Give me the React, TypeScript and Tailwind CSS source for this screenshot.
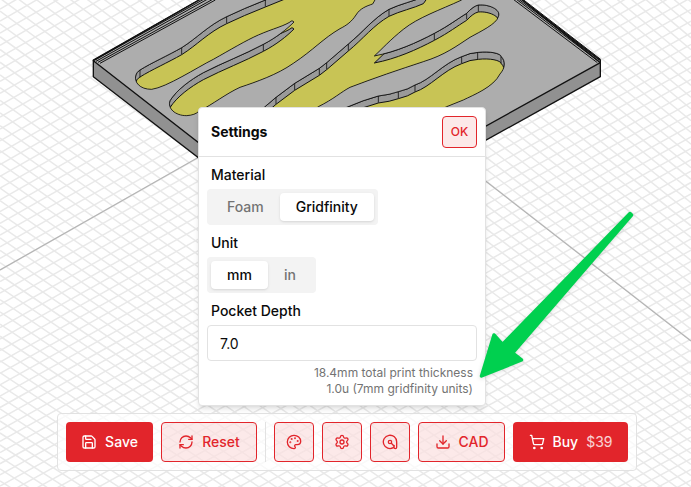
import { useState } from 'react'
import { Download, Palette, RefreshCw, Save, Settings, ShoppingCart } from 'lucide-react'

const outlineButton =
  'flex h-10 items-center justify-center gap-2 rounded border border-[#e2252b] bg-[#e2252b]/10 text-sm font-medium text-[#e2252b]'
const solidButton =
  'flex h-10 items-center justify-center gap-2 rounded bg-[#e2252b] text-sm font-medium text-white'

// Pocket rims. The floor is the same outline, dropped by the pocket depth.
const pockets = [
  'M 620 -80 L 620 -26 L 556 0 Q 490 26 440 50 C 385 76 350 115 305 143 C 265 166 215 188 180 210 C 155 225 163 268 215 268 C 260 262 350 203 400 178 C 450 150 500 120 535 105 C 580 85 615 78 636 62 L 642 66 C 620 88 590 112 550 133 C 490 165 430 187 370 218 C 330 240 290 270 270 302 C 262 325 285 347 320 347 Q 345 345 355 335 C 400 312 440 280 480 262 C 530 245 590 225 640 190 C 700 150 730 115 780 86 C 800 76 815 65 828 45 C 840 25 860 18 878 12 L 886 -2 L 900 -80 Z',
  'M 500 370 L 555 320 L 588 292 L 644 250 L 718 205 L 740 188 L 805 132 C 850 95 880 55 927 28 C 960 12 1000 4 1030 -10 L 1080 -80 L 1220 -80 L 1145 0 C 1080 30 1015 52 970 88 C 930 120 905 148 883 168 C 950 155 1010 128 1063 100 C 1110 75 1130 58 1160 40 Q 1180 18 1195 15 C 1225 12 1265 28 1255 50 C 1250 72 1200 95 1170 112 C 1130 138 1095 165 1030 185 C 960 208 880 235 810 262 C 785 275 760 298 715 320 L 650 370 Z',
  'M 740 350 L 800 322 Q 850 300 895 288 Q 930 284 955 275 Q 985 268 1005 255 C 1050 240 1090 190 1145 170 Q 1170 158 1195 157 C 1230 153 1262 160 1264 170 C 1278 185 1275 205 1260 222 C 1240 262 1180 285 1150 300 L 1100 320 L 1040 350 Z',
]

const creases = [
  [180, 210, 22],
  [305, 143, 20],
  [440, 50, 20],
  [556, 0, 20],
  [550, 133, 20],
  [588, 292, 20],
  [644, 250, 20],
  [718, 205, 20],
  [740, 188, 20],
  [805, 132, 20],
  [927, 28, 20],
  [1063, 100, 20],
  [1160, 40, 18],
  [1195, 15, 20],
  [895, 288, 20],
  [955, 275, 20],
  [1005, 255, 20],
  [1145, 170, 20],
  [1193, 157, 20],
  [1263, 170, 20],
]

// Ground grid in perspective: spacing and slope both ease off towards the bottom.
const gridLines = Array.from({ length: 120 }, (_, n) => {
  const i = n - 50
  const rise = 270 + 11.6 * i - 0.012 * i * i
  const fall = -197 + 13.2 * i - 0.012 * i * i
  return {
    i,
    rise,
    riseEnd: rise - 691 * (0.566 - 0.00005 * (rise - 270)),
    fall,
    fallEnd: fall + 691 * (0.778 - 0.0002 * (fall + 197)),
  }
})

function Scene() {
  return (
    <svg
      className="absolute inset-0 h-full w-full"
      viewBox="0 0 691 487"
      preserveAspectRatio="xMidYMid slice"
      aria-hidden="true"
    >
      <defs>
        {pockets.map((d, i) => (
          <clipPath id={`pocket-${i}`} key={i}>
            <path d={d} />
          </clipPath>
        ))}
      </defs>
      <g stroke="#e9e9e9" strokeWidth="1.5">
        {gridLines.map((g) => (
          <g key={g.i}>
            <line x1="0" y1={g.rise} x2="691" y2={g.riseEnd} />
            <line x1="0" y1={g.fall} x2="691" y2={g.fallEnd} />
          </g>
        ))}
      </g>
      <g stroke="#b4b4b4" strokeWidth="1.2">
        <line x1="0" y1="270" x2="347" y2="73" />
        <line x1="347" y1="73" x2="691" y2="341" />
      </g>
      <g transform="scale(.333333) translate(240 0)" stroke="#111" strokeWidth="4" strokeLinejoin="round">
        <path d="M 40 180 L 366 -5 L 1320 -5 L 1561 180 V 230 L 677 721 L 40 230 Z" fill="#919191" />
        <path d="M 40 182 L 366 -5 L 1320 -5 L 1561 188 L 677 678 Z" fill="#adadad" />
        <path
          d="M 44 180 L 376 -5 M 48 184 L 387 -5 M 54 187 L 398 -2 M 60 190 L 406 0 M 1300 -2 L 1552 188 M 1308 -3 L 1556 184 M 1315 -3 L 1558 180 M 1326 -4 L 1562 178"
          fill="none"
          strokeWidth="3"
        />
        {pockets.map((d, i) => (
          <g key={i} clipPath={`url(#pocket-${i})`} strokeWidth="3">
            <path d={d} fill="#9a9a9a" />
            <path d={d} transform="translate(0 21)" fill="#c8c455" />
          </g>
        ))}
        {pockets.map((d, i) => (
          <path key={i} d={d} fill="none" strokeWidth="2.5" />
        ))}
        {creases.map(([x, y, h]) => (
          <path key={`${x}-${y}`} d={`M ${x} ${y} v ${h}`} strokeWidth="2.5" />
        ))}
      </g>
    </svg>
  )
}

function Arrow() {
  return (
    <svg
      className="pointer-events-none absolute inset-0 z-20 h-full w-full drop-shadow-sm"
      viewBox="0 0 691 487"
      preserveAspectRatio="xMidYMid slice"
      aria-hidden="true"
    >
      <path
        d="M 481.5 376 L 494 335 L 502.5 344.5 L 630 213.5 L 631.5 215 L 512.5 353 L 521.5 360 Z"
        fill="#00d04f"
        stroke="#00d04f"
        strokeWidth="3.5"
        strokeLinejoin="round"
      />
    </svg>
  )
}

function TapeIcon() {
  return (
    <svg
      width="16"
      height="16"
      viewBox="0 0 24 24"
      fill="none"
      stroke="currentColor"
      strokeWidth="2"
      strokeLinecap="round"
      strokeLinejoin="round"
      aria-hidden="true"
    >
      <path d="M17 20.5A10 10 0 1 1 22 12v8a2 2 0 0 1-4 0v-3" />
      <circle cx="12" cy="12" r="2.5" />
      <path d="M14 14 18 18" />
    </svg>
  )
}

type SegmentProps = {
  label: string
  options: string[]
  value: string
  onChange: (value: string) => void
}

function Segment({ label, options, value, onChange }: SegmentProps) {
  return (
    <div role="group" aria-label={label} className="flex flex-col items-start gap-1">
      <span className="px-1 text-sm font-medium">{label}</span>
      <div className="flex rounded bg-[#f3f3f3] p-1">
        {options.map((option) => (
          <button
            key={option}
            type="button"
            aria-pressed={option === value}
            onClick={() => onChange(option)}
            className={
              option === value
                ? 'h-7 rounded bg-white px-4 text-sm font-medium shadow-sm'
                : 'h-7 rounded px-4 text-sm font-medium text-[#737373]'
            }
          >
            {option}
          </button>
        ))}
      </div>
    </div>
  )
}

function SettingsPanel({ onClose }: { onClose: () => void }) {
  const [material, setMaterial] = useState('Gridfinity')
  const [unit, setUnit] = useState('mm')

  return (
    <div className="absolute bottom-full left-1/2 z-10 mb-4 w-72 -translate-x-1/2 rounded border border-[#e2e2e2] bg-white shadow-md">
      <div className="flex items-center justify-between border-b border-[#e2e2e2] p-2">
        <h2 className="px-1 text-sm font-bold">Settings</h2>
        <button
          type="button"
          onClick={onClose}
          className="h-8 w-[35px] rounded border border-[#e2252b] bg-[#e2252b]/10 text-xs font-medium text-[#e2252b]"
        >
          OK
        </button>
      </div>
      <div className="flex flex-col gap-2 p-2">
        <Segment label="Material" options={['Foam', 'Gridfinity']} value={material} onChange={setMaterial} />
        <Segment label="Unit" options={['mm', 'in']} value={unit} onChange={setUnit} />
        <div className="flex flex-col gap-1">
          <label htmlFor="depth" className="px-1 text-sm font-medium">
            Pocket Depth
          </label>
          <input
            id="depth"
            type="text"
            defaultValue="7.0"
            className="h-9 w-full rounded border border-[#e2e2e2] px-3 text-sm"
          />
          <p className="px-1 text-right text-xs text-[#737373]">
            18.4mm total print thickness
            <br />
            1.0u (7mm gridfinity units)
          </p>
        </div>
      </div>
    </div>
  )
}

export default function App() {
  const [open, setOpen] = useState(true)

  return (
    <main className="relative flex min-h-screen flex-col items-center justify-end overflow-hidden bg-white pb-4 pl-[3px] font-['Inter',sans-serif] text-[#0a0a0a]">
      <Scene />
      <div className="relative flex gap-2 rounded border border-[#e2e2e2] bg-white/70 p-2">
        <button type="button" className={`${solidButton} w-[87px]`}>
          <Save size={16} />
          Save
        </button>
        <button type="button" className={`${outlineButton} w-24`}>
          <RefreshCw size={16} />
          Reset
        </button>
        <div className="w-px bg-[#e2e2e2]" />
        <button type="button" aria-label="Colors" className={`${outlineButton} w-10`}>
          <Palette size={16} />
        </button>
        <div className="relative">
          <button
            type="button"
            aria-label="Settings"
            onClick={() => setOpen(!open)}
            className={`${outlineButton} w-10`}
          >
            <Settings size={16} />
          </button>
          {open && <SettingsPanel onClose={() => setOpen(false)} />}
        </div>
        <button type="button" aria-label="Measure" className={`${outlineButton} w-10`}>
          <TapeIcon />
        </button>
        <button type="button" className={`${outlineButton} w-[87px]`}>
          <Download size={16} />
          CAD
        </button>
        <button type="button" className={`${solidButton} w-[115px]`}>
          <ShoppingCart size={16} />
          Buy
          <span className="font-normal text-white/80">$39</span>
        </button>
      </div>
      <Arrow />
    </main>
  )
}
